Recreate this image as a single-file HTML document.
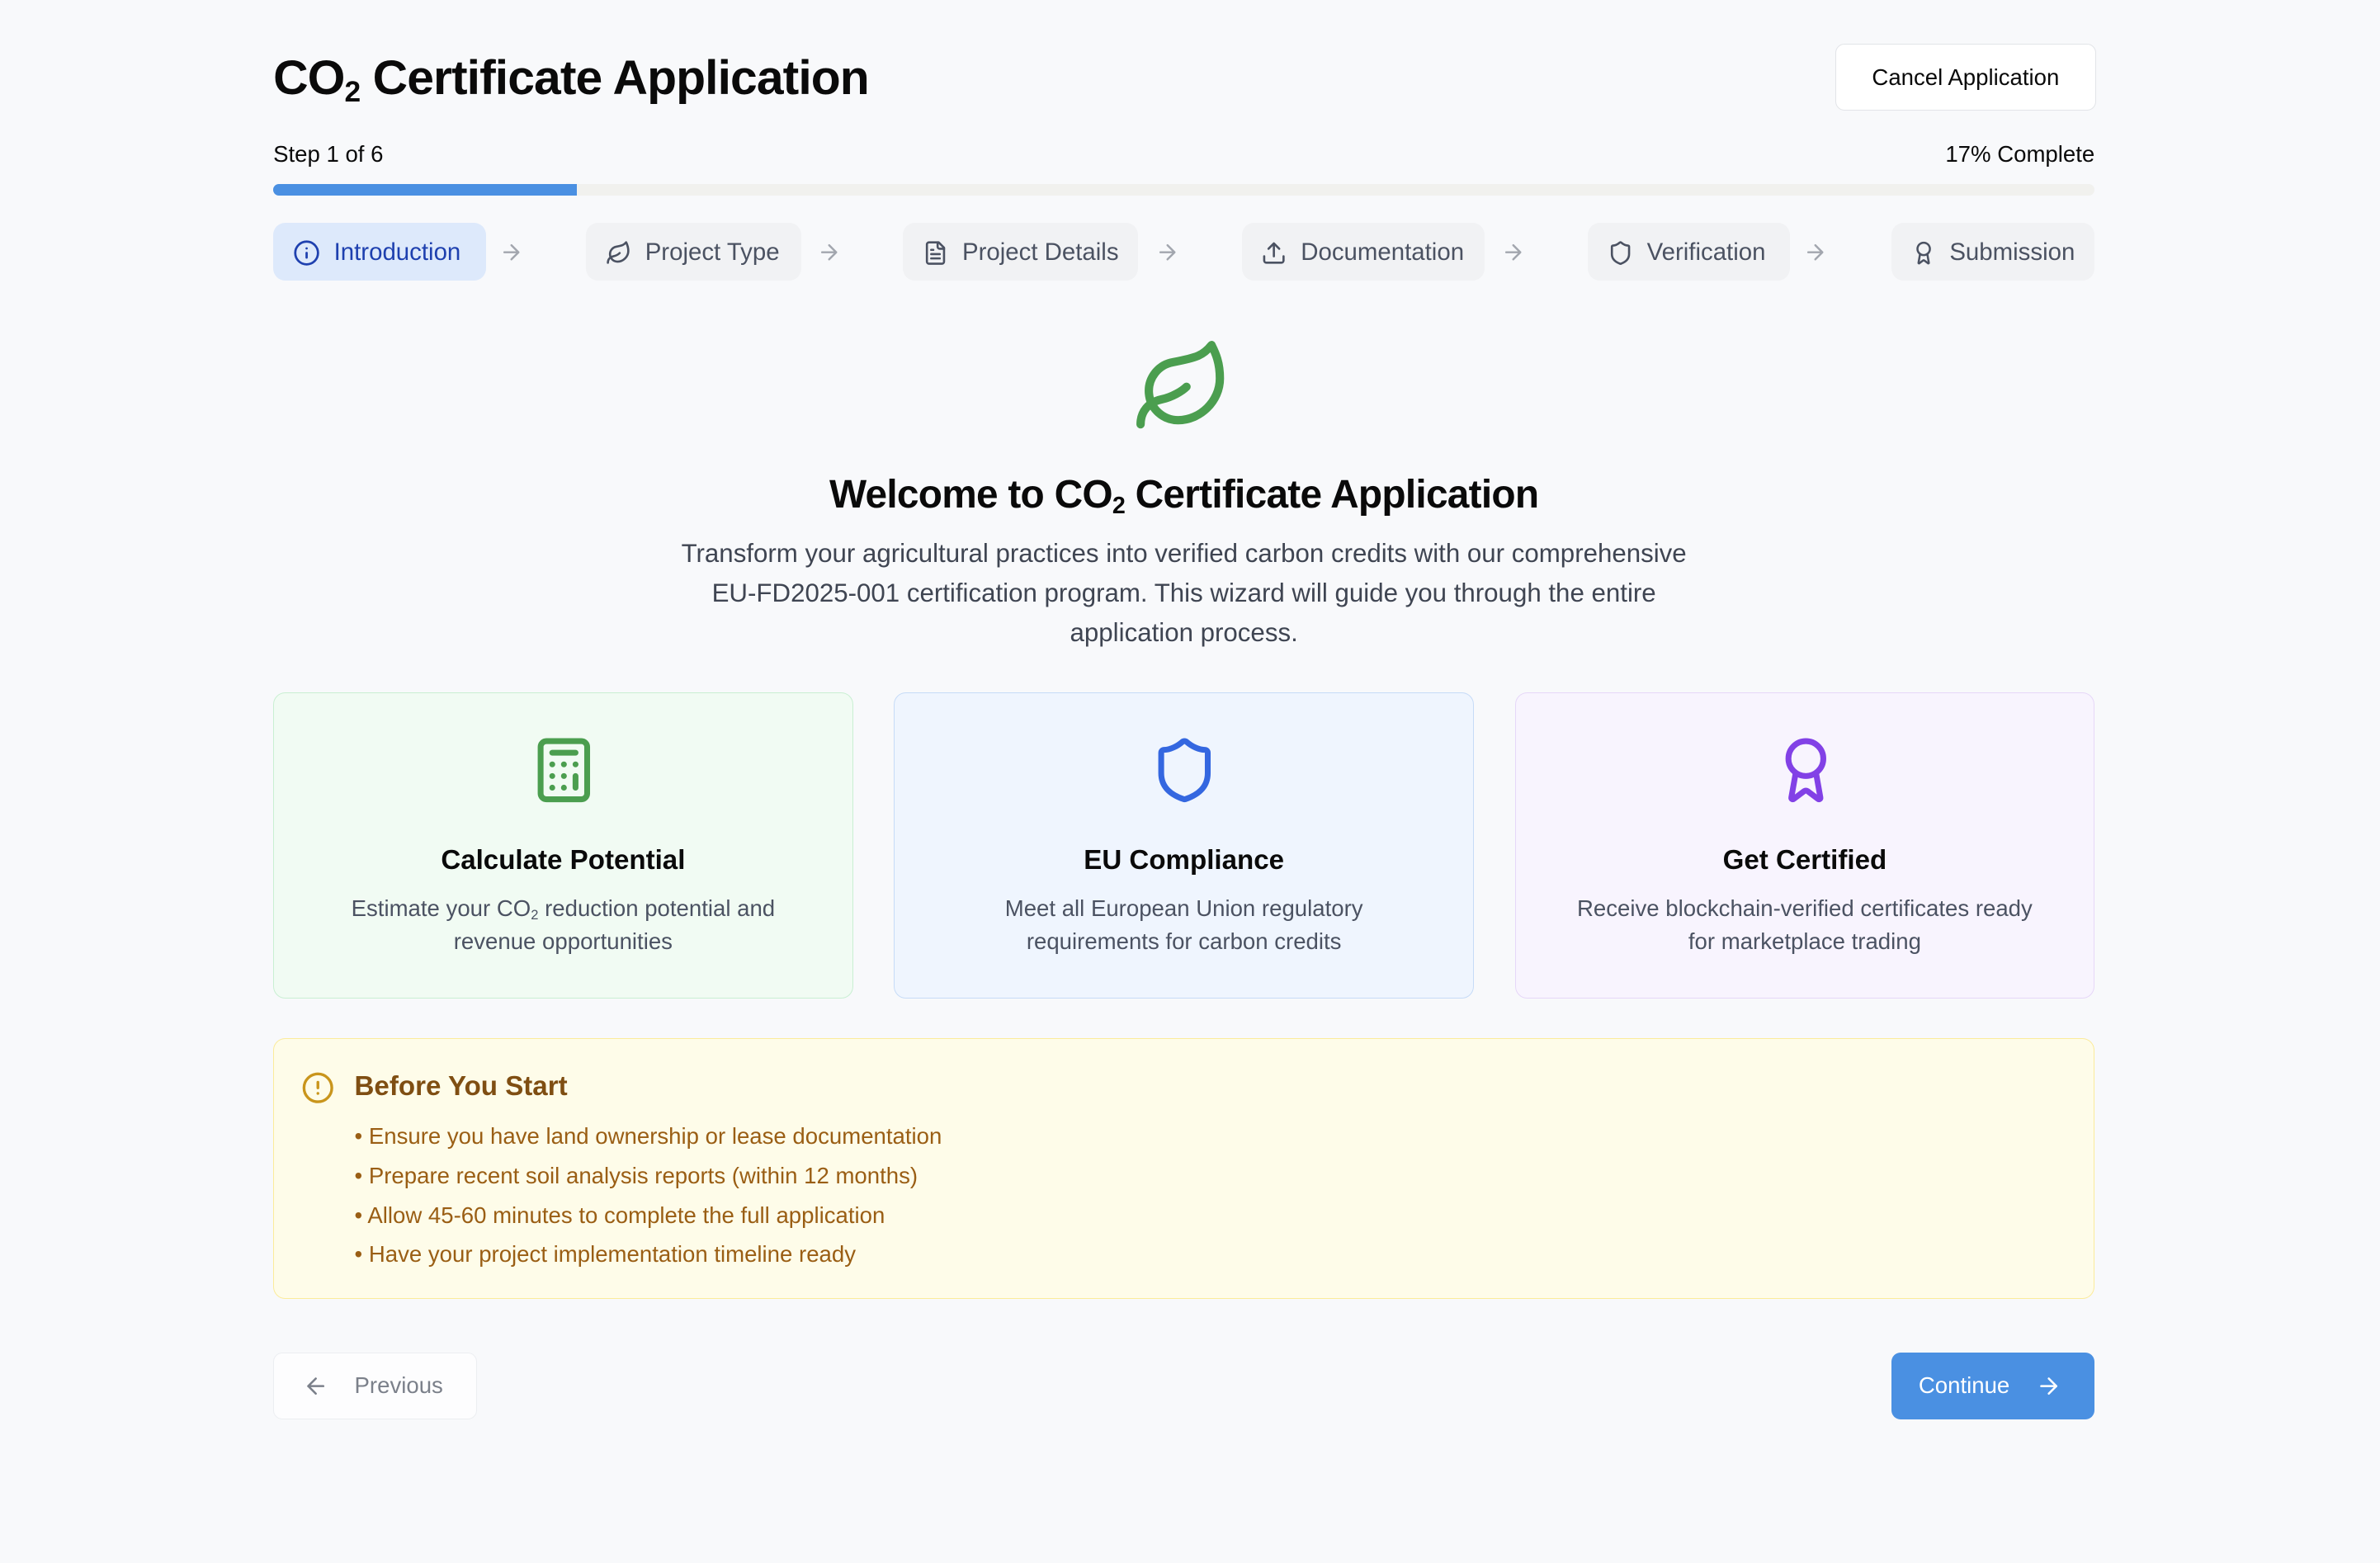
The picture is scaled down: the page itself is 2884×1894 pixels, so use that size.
<!DOCTYPE html>
<html><head><meta charset="utf-8"><style>
*{box-sizing:border-box;margin:0;padding:0}
html,body{width:2884px;height:1894px;overflow:hidden;background:#f8f9fb}
body{font-family:"Liberation Sans",sans-serif;color:#0a0a0a}
#r{zoom:1.8393;width:1568px;height:1030px;position:relative}
.a{position:absolute}
svg{display:block}
.ic{fill:none;stroke:currentColor;stroke-width:2;stroke-linecap:round;stroke-linejoin:round}
.pill{position:absolute;top:147px;height:38px;border-radius:8px;background:#f1f2f4;color:#4b5262;font-size:16px;display:flex;align-items:center;padding:0 13px;gap:9px;white-space:nowrap;padding-top:1px}
.arr{position:absolute;top:158px;color:#a2a6ae}
.card{position:absolute;top:456px;width:382px;height:202px;border-radius:8px;border:1px solid;text-align:center}
.card h3{position:absolute;top:100px;left:0;right:0;font-size:18px;font-weight:bold}
.card p{position:absolute;top:131px;left:30px;right:30px;font-size:15px;line-height:22px;color:#4b5262}
.card svg{position:absolute;left:168px;top:28px}
sub{font-size:.6em;vertical-align:-0.25em;line-height:0}
</style></head><body><div id="r">
<div class="a" style="left:180px;top:33px;font-size:32px;font-weight:bold;letter-spacing:-0.5px">CO<sub>2</sub> Certificate Application</div>
<div class="a" style="left:1209px;top:29px;width:172px;height:44px;border:1px solid #e2e4e8;border-radius:6px;background:#fff;font-size:15px;display:flex;align-items:center;justify-content:center">Cancel Application</div>
<div class="a" style="left:180px;top:93px;font-size:15px">Step 1 of 6</div>
<div class="a" style="right:188px;top:93px;font-size:15px">17% Complete</div>
<div class="a" style="left:180px;top:121px;width:1200px;height:8px;background:#f1f1ee;border-radius:4px;overflow:hidden"><div style="width:200px;height:8px;background:#4a90e2"></div></div>

<div class="pill" style="left:180px;width:140px;background:#dde9fb;color:#1e40af"><svg width="18" height="18" viewBox="0 0 24 24" class="ic"><circle cx="12" cy="12" r="10"/><path d="M12 16v-4M12 8h.01"/></svg>Introduction</div>
<svg class="arr ic" style="left:329px" width="16" height="16" viewBox="0 0 24 24"><path d="M5 12h14M12 5l7 7-7 7"/></svg>
<div class="pill" style="left:386px;width:142px"><svg width="17" height="17" viewBox="0 0 24 24" class="ic"><path d="M11 20A7 7 0 0 1 9.8 6.1C15.5 5 17 4.48 19 2c1 2 2 4.18 2 8 0 5.5-4.78 10-10 10Z"/><path d="M2 21c0-3 1.85-5.36 5.08-6C9.5 14.52 12 13 13 12"/></svg>Project Type</div>
<svg class="arr ic" style="left:538px" width="16" height="16" viewBox="0 0 24 24"><path d="M5 12h14M12 5l7 7-7 7"/></svg>
<div class="pill" style="left:595px;width:155px"><svg width="17" height="17" viewBox="0 0 24 24" class="ic"><path d="M15 2H6a2 2 0 0 0-2 2v16a2 2 0 0 0 2 2h12a2 2 0 0 0 2-2V7Z"/><path d="M14 2v4a2 2 0 0 0 2 2h4M10 9H8M16 13H8M16 17H8"/></svg>Project Details</div>
<svg class="arr ic" style="left:761px" width="16" height="16" viewBox="0 0 24 24"><path d="M5 12h14M12 5l7 7-7 7"/></svg>
<div class="pill" style="left:818px;width:160px"><svg width="17" height="17" viewBox="0 0 24 24" class="ic"><path d="M21 15v4a2 2 0 0 1-2 2H5a2 2 0 0 1-2-2v-4M17 8l-5-5-5 5M12 3v12"/></svg>Documentation</div>
<svg class="arr ic" style="left:989px" width="16" height="16" viewBox="0 0 24 24"><path d="M5 12h14M12 5l7 7-7 7"/></svg>
<div class="pill" style="left:1046px;width:133px"><svg width="17" height="17" viewBox="0 0 24 24" class="ic"><path d="M20 13c0 5-3.5 7.5-7.66 8.95a1 1 0 0 1-.67-.01C7.5 20.5 4 18 4 13V6a1 1 0 0 1 1-1c2 0 4.5-1.2 6.24-2.72a1.17 1.17 0 0 1 1.52 0C14.51 3.81 17 5 19 5a1 1 0 0 1 1 1z"/></svg>Verification</div>
<svg class="arr ic" style="left:1188px" width="16" height="16" viewBox="0 0 24 24"><path d="M5 12h14M12 5l7 7-7 7"/></svg>
<div class="pill" style="left:1246px;width:134px"><svg width="17" height="17" viewBox="0 0 24 24" class="ic"><path d="m15.48 12.89 1.51 8.53a.5.5 0 0 1-.81.47l-3.58-2.69a1 1 0 0 0-1.2 0l-3.59 2.69a.5.5 0 0 1-.81-.47l1.51-8.53"/><circle cx="12" cy="8" r="6"/></svg>Submission</div>

<svg class="a" style="left:746px;top:222px;color:#4b9e4f" width="66" height="66" viewBox="0 0 24 24"><g class="ic"><path d="M11 20A7 7 0 0 1 9.8 6.1C15.5 5 17 4.48 19 2c1 2 2 4.18 2 8 0 5.5-4.78 10-10 10Z"/><path d="M2 21c0-3 1.85-5.36 5.08-6C9.5 14.52 12 13 13 12"/></g></svg>
<div class="a" style="left:0;width:1560px;top:311px;text-align:center;font-size:26px;font-weight:bold;letter-spacing:-0.4px">Welcome to CO<sub>2</sub> Certificate Application</div>
<div class="a" style="left:435px;width:690px;top:352px;text-align:center;font-size:17px;line-height:26px;color:#3f4552">Transform your agricultural practices into verified carbon credits with our comprehensive <span style="white-space:nowrap">EU-FD2025-001</span> certification program. This wizard will guide you through the entire application process.</div>

<div class="card" style="left:180px;background:#f1fbf3;border-color:#c9efd2">
<svg width="46" height="46" viewBox="0 0 24 24" style="color:#4b9e4f"><g class="ic"><rect x="4" y="2" width="16" height="20" rx="2"/><path d="M8 6h8M16 14v4M16 10h.01M12 10h.01M8 10h.01M12 14h.01M8 14h.01M12 18h.01M8 18h.01"/></g></svg>
<h3>Calculate Potential</h3><p>Estimate your CO<sub>2</sub> reduction potential and revenue opportunities</p></div>
<div class="card" style="left:589px;background:#eff5fe;border-color:#c6dbf7">
<svg width="46" height="46" viewBox="0 0 24 24" style="color:#3467e0"><g class="ic"><path d="M20 13c0 5-3.5 7.5-7.66 8.95a1 1 0 0 1-.67-.01C7.5 20.5 4 18 4 13V6a1 1 0 0 1 1-1c2 0 4.5-1.2 6.24-2.72a1.17 1.17 0 0 1 1.52 0C14.51 3.81 17 5 19 5a1 1 0 0 1 1 1z"/></g></svg>
<h3>EU Compliance</h3><p>Meet all European Union regulatory requirements for carbon credits</p></div>
<div class="card" style="left:998px;background:#f8f4fe;border-color:#e6d7f8">
<svg width="46" height="46" viewBox="0 0 24 24" style="color:#8241e6"><g class="ic"><path d="m15.48 12.89 1.51 8.53a.5.5 0 0 1-.81.47l-3.58-2.69a1 1 0 0 0-1.2 0l-3.59 2.69a.5.5 0 0 1-.81-.47l1.51-8.53"/><circle cx="12" cy="8" r="6"/></g></svg>
<h3>Get Certified</h3><p>Receive blockchain-verified certificates ready for marketplace trading</p></div>

<div class="a" style="left:180px;top:684px;width:1200px;height:172px;background:#fefce9;border:1px solid #fbeb9b;border-radius:8px">
<svg class="a" style="left:18px;top:21px;color:#c9951c" width="22" height="22" viewBox="0 0 24 24"><g class="ic"><circle cx="12" cy="12" r="10"/><path d="M12 8v4M12 16h.01"/></g></svg>
<div class="a" style="left:53px;top:21px;font-size:18px;font-weight:bold;color:#7f4e12">Before You Start</div>
<div class="a" style="left:53px;top:51px;font-size:15px;line-height:26px;color:#9a5e14">• Ensure you have land ownership or lease documentation<br>• Prepare recent soil analysis reports (within 12 months)<br>• Allow 45-60 minutes to complete the full application<br>• Have your project implementation timeline ready</div>
</div>

<div class="a" style="left:180px;top:891px;width:134px;height:44px;border:1px solid #eceef1;border-radius:6px;background:#fdfdfe;color:#7b808a;font-size:15px;display:flex;align-items:center;gap:17px;padding-left:19px"><svg width="17" height="17" viewBox="0 0 24 24" class="ic"><path d="M19 12H5M12 19l-7-7 7-7"/></svg>Previous</div>
<div class="a" style="left:1246px;top:891px;width:134px;height:44px;border-radius:6px;background:#4a90e2;color:#fff;font-size:15px;display:flex;align-items:center;gap:17px;padding-left:18px">Continue<svg width="17" height="17" viewBox="0 0 24 24" class="ic"><path d="M5 12h14M12 5l7 7-7 7"/></svg></div>
</div></body></html>
